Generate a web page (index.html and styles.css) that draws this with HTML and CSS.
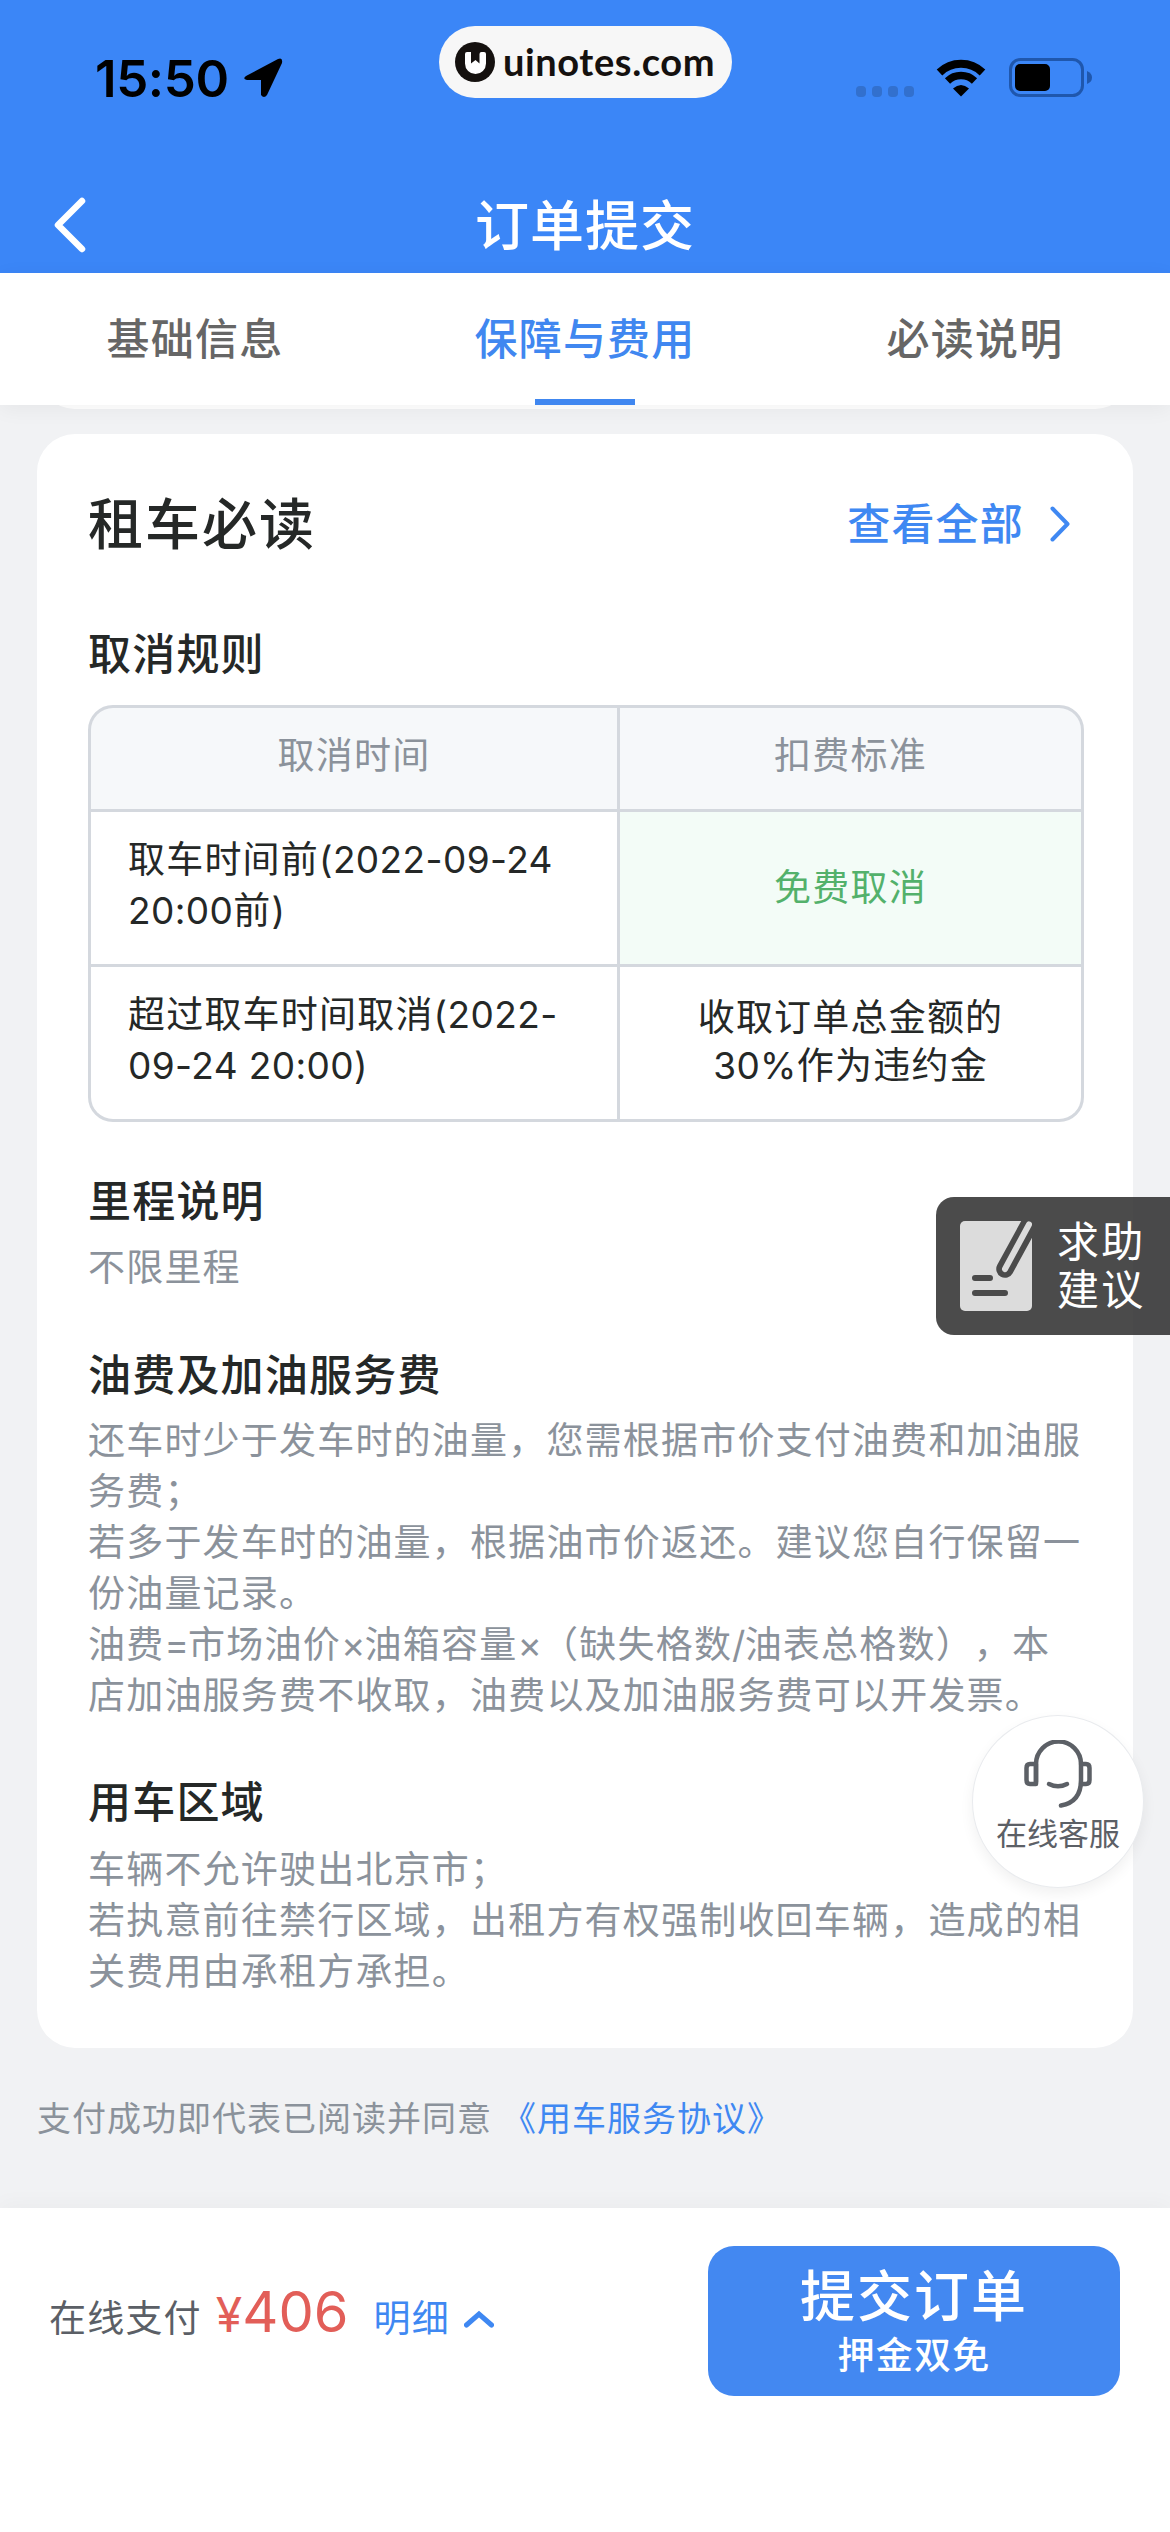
FILE: index.html
```html
<!DOCTYPE html>
<html lang="zh-CN">
<head>
    <meta charset="UTF-8">
    <title>订单提交</title>
    <link rel="stylesheet" href="styles.css">
</head>
<body>
    <div class="page">
        <header class="header">
            <div class="status">
                <div class="status-left">
                    <span class="time">15:50</span>
                    <svg class="location" viewBox="0 0 40 40"><path d="M3 18 L35 1 Q40 -1 39 5 L24 37 Q21 41 18 37 L18 22 L4 22 Q-1 21 3 18 Z"/></svg>
                </div>
                <div class="pill">
                    <svg class="pill-logo" viewBox="0 0 40 40">
                        <circle cx="20" cy="20" r="20" fill="#15110f"/>
                        <path d="M12 10 H16 V21.500 L20.500 18 L24.500 21.500 V12 Q24.500 10 26.500 10 H29 Q31 10 31 12 V21.500 A10.500 10.500 0 0 1 10 21.500 V12 Q10 10 12 10 Z" fill="#fff"/>
                    </svg>
                    <span>uinotes.com</span>
                </div>
                <div class="status-right">
                    <div class="signal"><i></i><i></i><i></i><i></i></div>
                    <svg class="wifi" viewBox="0 0 52 38">
                        <path d="M4.500 13.500 A31 31 0 0 1 47.500 13.500" fill="none" stroke="#000" stroke-width="8"/>
                        <path d="M12.500 22 A19.500 19.500 0 0 1 39.500 22" fill="none" stroke="#000" stroke-width="7.500"/>
                        <path d="M18 29.500 Q26 22.500 34 29.500 L26 37.500 Z"/>
                    </svg>
                    <svg class="battery" viewBox="0 0 84 40">
                        <rect x="1.500" y="1.500" width="72" height="36" rx="10" fill="none" stroke="#1f57ad" stroke-width="3"/>
                        <rect x="6" y="6" width="35" height="27" rx="5"/>
                        <path d="M78 13 Q83 15 83 19.500 Q83 24 78 26 Z" fill="#1f57ad"/>
                    </svg>
                </div>
            </div>
            <div class="nav">
                <svg class="back" viewBox="0 0 32 56"><path d="M28 4 L4 28 L28 52"/></svg>
                <h1>订单提交</h1>
            </div>
        </header>

        <nav class="tabs">
            <a class="tab">基础信息</a>
            <a class="tab active">保障与费用</a>
            <a class="tab">必读说明</a>
        </nav>

        <main class="content">
            <div class="prev-card"></div>
            <section class="card">
                <div class="card-head">
                    <h2>租车必读</h2>
                    <a class="more">查看全部
                        <svg viewBox="0 0 20 36"><path d="M2.500 2.500 L17.500 18 L2.500 33.500"/></svg>
                    </a>
                </div>

                <h3>取消规则</h3>
                <div class="rules">
                    <div class="cell th">取消时间</div>
                    <div class="cell th">扣费标准</div>
                    <div class="cell time-cell">取车时间前<span class="num">(2022-09-24</span><br><span class="num">20:00</span>前<span class="num">)</span></div>
                    <div class="cell free">免费取消</div>
                    <div class="cell time-cell">超过取车时间取消<span class="num">(2022-</span><br><span class="num">09-24 20:00)</span></div>
                    <div class="cell fee">收取订单总金额的<br><span class="num">30%</span>作为违约金</div>
                </div>

                <h3 class="mileage">里程说明</h3>
                <p>不限里程</p>

                <h3>油费及加油服务费</h3>
                <p class="fuel">还车时少于发车时的油量，您需根据市价支付油费和加油服<br>务费；<br>若多于发车时的油量，根据油市价返还。建议您自行保留一<br>份油量记录。<br>油费<span class="sign">=</span>市场油价<span class="sign">×</span>油箱容量<span class="sign">×</span>（缺失格数<span class="sign">/</span>油表总格数），本<br>店加油服务费不收取，油费以及加油服务费可以开发票。</p>

                <h3>用车区域</h3>
                <p>车辆不允许驶出北京市；<br>若执意前往禁行区域，出租方有权强制收回车辆，造成的相<br>关费用由承租方承担。</p>
            </section>
            <div class="agree">支付成功即代表已阅读并同意<a>《用车服务协议》</a></div>
        </main>

        <footer class="footer">
            <div class="pay">
                <span class="pay-label">在线支付</span>
                <span class="price"><small>¥</small>406</span>
                <a class="detail">明细</a>
                <svg class="up" viewBox="0 0 30 18"><path d="M2.500 15 L15 4 L27.500 15"/></svg>
            </div>
            <button class="submit">
                <span class="submit-main">提交订单</span>
                <span class="submit-sub">押金双免</span>
            </button>
        </footer>

        <div class="help">
            <svg viewBox="0 0 72 90">
                <rect width="72" height="90" rx="5" fill="#dcdcdc"/>
                <path d="M75 -7 L45 48" stroke="#4b4b4b" stroke-width="17.500" stroke-linecap="round"/>
                <path d="M69 3.500 L45 48" stroke="#dcdcdc" stroke-width="6" stroke-linecap="round"/>
                <path d="M15 57 H30 M15 72 H45" stroke="#4b4b4b" stroke-width="6" stroke-linecap="round"/>
            </svg>
            <span>求助<br>建议</span>
        </div>

        <div class="service">
            <svg viewBox="0 0 68 68">
                <path d="M12 42 V24 A22.500 22.500 0 0 1 57 24 V40 Q57 62 37 65.500"/>
                <path d="M12 24 H6 Q2.500 24 2.500 28 V40 Q2.500 44 6 44 H12 Z"/>
                <path d="M57 24 H62 Q65.500 24 65.500 28 V40 Q65.500 44 62 44 H57"/>
                <path d="M25 44 Q34 48.500 43 44"/>
            </svg>
            <span>在线客服</span>
        </div>
    </div>
</body>
</html>
```
FILE: styles.css
```css
* {
    box-sizing: border-box;
    margin: 0;
    padding: 0;
}

body {
    width: 1170px;
    font-family: Inter, "Noto Sans CJK SC", sans-serif;
    background-color: #f1f2f4;
    color: #252827;
    text-spacing-trim: space-all;
}

.page {
    position: relative;
    width: 1170px;
    height: 2532px;
    overflow: hidden;
    display: flex;
    flex-direction: column;
    white-space: nowrap;
}

/* header */
.header {
    height: 273px;
    background-color: #3b86f7;
}

.status {
    height: 156px;
    padding: 0 77px 0 95px;
    display: grid;
    grid-template-columns: 344px 293px 1fr;
}

.status-left {
    display: flex;
    align-items: center;
    gap: 14px;
    color: #000;
}

.time {
    font-size: 51px;
    font-weight: 600;
    letter-spacing: -0.4px;
}

.location {
    width: 40px;
    height: 40px;
}

.pill {
    height: 72px;
    margin-top: 26px;
    padding-left: 16px;
    border-radius: 36px;
    background-color: #f7f7f7;
    display: flex;
    align-items: center;
    gap: 8px;
    font: 700 38px Lato, sans-serif;
    letter-spacing: 0.6px;
    color: #15110f;
}

.pill span {
    margin-top: -3px;
}

.pill-logo {
    width: 40px;
    height: 40px;
}

.status-right {
    display: flex;
    align-items: center;
    justify-content: flex-end;
}

.signal {
    display: flex;
    gap: 6px;
    margin: 26px 21px 0 0;
}

.signal i {
    width: 10px;
    height: 11px;
    border-radius: 4px;
    background-color: #3270ce;
}

.wifi {
    width: 52px;
    height: 38px;
    margin-right: 22px;
}

.battery {
    width: 84px;
    height: 40px;
}

.nav {
    height: 117px;
    display: grid;
    grid-template-columns: 85px 1fr 85px;
    align-items: center;
}

.back {
    width: 32px;
    height: 56px;
    margin-left: 54px;
    margin-top: 21px;
    fill: none;
    stroke: #fff;
    stroke-width: 6.5px;
    stroke-linecap: round;
    stroke-linejoin: round;
}

.nav h1 {
    margin-top: 25px;
    line-height: 60px;
    text-align: center;
    font-size: 54px;
    font-weight: 500;
    letter-spacing: 1px;
    color: #fff;
}

/* tabs */
.tabs {
    position: relative;
    z-index: 1;
    height: 132px;
    background-color: #fff;
    box-shadow: 0 4px 20px rgba(0, 0, 0, 0.05);
    display: grid;
    grid-template-columns: repeat(3, 1fr);
}

.tab {
    display: flex;
    flex-direction: column;
    align-items: center;
    line-height: 132px;
    font-size: 43px;
    font-weight: 500;
    letter-spacing: 1.2px;
    color: #666;
}

.tab.active {
    color: #4087f0;
}

.tab.active::after {
    content: "";
    width: 100px;
    height: 6px;
    margin-top: -6px;
    background-color: #4087f0;
}

/* content */
.content {
    height: 1803px;
    padding: 0 37px;
}

.prev-card {
    height: 40px;
    margin-top: -36px;
    border-radius: 0 0 38px 38px;
    background-color: #fff;
}

.card {
    margin-top: 25px;
    height: 1614px;
    padding: 60px 50px 0 51px;
    border-radius: 38px;
    background-color: #fff;
}

.card-head {
    display: flex;
    justify-content: space-between;
    align-items: center;
    height: 60px;
    margin-bottom: 70px;
    line-height: 60px;
}

.card-head h2 {
    font-size: 55px;
    font-weight: 500;
    letter-spacing: 2px;
}

.more {
    display: flex;
    align-items: center;
    gap: 26px;
    padding-right: 13px;
    font-size: 43px;
    font-weight: 500;
    letter-spacing: 1.2px;
    color: #3f88f2;
}

.more svg {
    width: 20px;
    height: 36px;
    fill: none;
    stroke: #3f88f2;
    stroke-width: 4px;
    stroke-linecap: round;
    stroke-linejoin: round;
}

h3 {
    height: 60px;
    line-height: 60px;
    font-size: 43px;
    font-weight: 500;
    letter-spacing: 1.2px;
}

p {
    margin: 12px 0 52px;
    line-height: 51px;
    font-size: 37px;
    letter-spacing: 1.2px;
    color: #8b929b;
}

.fuel {
    margin: 10px 0 51px;
}

.sign {
    letter-spacing: -0.8px;
}

.mileage {
    margin-top: 49px;
}

.mileage + p {
    margin: 11px 0 52px;
}

.rules {
    display: grid;
    grid-template-columns: 526px 461px;
    grid-template-rows: 101px 152px 152px;
    gap: 3px;
    width: 996px;
    margin-top: 21px;
    border: 3px solid #d4d8de;
    border-radius: 25px;
    background-color: #d4d8de;
    overflow: hidden;
}

.cell {
    display: flex;
    align-items: center;
    justify-content: center;
    background-color: #fff;
    line-height: 48px;
    font-size: 37px;
    letter-spacing: 1.2px;
    text-align: center;
}

.th {
    padding-bottom: 5px;
    background-color: #f6f8fa;
    color: #8b929b;
}

.time-cell {
    display: block;
    padding: 22px 0 0 37px;
    text-align: left;
    line-height: 51px;
}

.free {
    background-color: #f3fcf7;
    color: #53b16b;
}

.fee {
    display: block;
    padding-top: 27px;
}

.num {
    letter-spacing: 0.4px;
}

.agree {
    margin-top: 46px;
    line-height: 50px;
    font-size: 34px;
    letter-spacing: 1px;
    color: #8b929b;
}

.agree a {
    margin-left: 10px;
    color: #3f88f2;
}

/* bottom bar */
.footer {
    height: 324px;
    padding: 38px 50px 0 49px;
    background-color: #fff;
    box-shadow: 0 -4px 20px rgba(0, 0, 0, 0.03);
    display: flex;
    justify-content: space-between;
    align-items: flex-start;
}

.pay {
    display: flex;
    align-items: baseline;
    margin-top: 32px;
    font-size: 37px;
    letter-spacing: 1.2px;
    color: #5b5f66;
}

.price {
    margin-left: 14px;
    font-size: 56px;
    letter-spacing: 0;
    color: #e25e58;
}

.price small {
    font-size: 48px;
}

.detail {
    margin-left: 25px;
    color: #3f88f2;
}

.up {
    width: 30px;
    height: 18px;
    margin-left: 14px;
    position: relative;
    top: -4px;
    fill: none;
    stroke: #3f88f2;
    stroke-width: 5px;
    stroke-linecap: round;
}

.submit {
    width: 412px;
    height: 150px;
    padding-top: 19px;
    border: none;
    border-radius: 26px;
    background-color: #4388f1;
    font-family: inherit;
    color: #fff;
    display: flex;
    flex-direction: column;
    align-items: center;
}

.submit-main {
    line-height: 62px;
    font-size: 55px;
    font-weight: 500;
    letter-spacing: 2px;
}

.submit-sub {
    line-height: 58px;
    font-size: 37px;
    font-weight: 500;
    letter-spacing: 1.2px;
}

/* floating buttons */
.help {
    position: absolute;
    top: 1197px;
    right: 0;
    width: 234px;
    height: 138px;
    padding-left: 24px;
    border-radius: 18px 0 0 18px;
    background-color: rgba(40, 40, 40, 0.84);
    display: flex;
    align-items: center;
    gap: 25px;
    line-height: 48px;
    font-size: 42px;
    letter-spacing: 2.2px;
    color: #fff;
}

.help svg {
    width: 72px;
    height: 90px;
}

.service {
    position: absolute;
    top: 1715px;
    left: 972px;
    width: 172px;
    height: 173px;
    padding-top: 24px;
    border: 1px solid #e9ebee;
    border-radius: 50%;
    background-color: #fff;
    box-shadow: 0 6px 14px rgba(0, 0, 0, 0.06);
    display: flex;
    flex-direction: column;
    align-items: center;
    font-size: 31px;
    line-height: 52px;
    color: #5c6066;
}

.service svg {
    width: 68px;
    height: 68px;
    fill: none;
    stroke: #5c6066;
    stroke-width: 4.5px;
    stroke-linecap: round;
    stroke-linejoin: round;
}
```
